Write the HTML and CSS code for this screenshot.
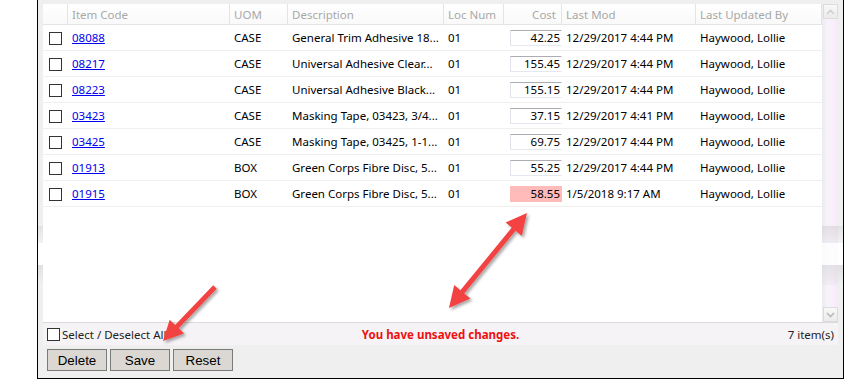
FILE: index.html
```html
<!DOCTYPE html>
<html lang="en">

<head>
  <meta charset="UTF-8" />
  <title>Item Costs</title>
  <link rel="stylesheet" href="styles.css">
</head>

<body>
  <div class="panel">
    <div class="grid-box">
      <div class="grid-main">
        <table class="grid">
          <colgroup>
            <col style="width:25px"><col style="width:162px"><col style="width:58px"><col style="width:156px">
            <col style="width:60px"><col style="width:58px"><col style="width:134px"><col style="width:126px">
          </colgroup>
          <thead>
            <tr>
              <th></th>
              <th>Item Code</th>
              <th>UOM</th>
              <th>Description</th>
              <th>Loc Num</th>
              <th class="num">Cost</th>
              <th>Last Mod</th>
              <th>Last Updated By</th>
            </tr>
          </thead>
          <tbody>
            <tr>
              <td><span class="chk"></span></td>
              <td><a href="#">08088</a></td>
              <td>CASE</td>
              <td>General Trim Adhesive 18...</td>
              <td>01</td>
              <td class="cost"><input value="42.25" /></td>
              <td>12/29/2017 4:44 PM</td>
              <td>Haywood, Lollie</td>
            </tr>
            <tr>
              <td><span class="chk"></span></td>
              <td><a href="#">08217</a></td>
              <td>CASE</td>
              <td>Universal Adhesive Clear...</td>
              <td>01</td>
              <td class="cost"><input value="155.45" /></td>
              <td>12/29/2017 4:44 PM</td>
              <td>Haywood, Lollie</td>
            </tr>
            <tr>
              <td><span class="chk"></span></td>
              <td><a href="#">08223</a></td>
              <td>CASE</td>
              <td>Universal Adhesive Black...</td>
              <td>01</td>
              <td class="cost"><input value="155.15" /></td>
              <td>12/29/2017 4:44 PM</td>
              <td>Haywood, Lollie</td>
            </tr>
            <tr>
              <td><span class="chk"></span></td>
              <td><a href="#">03423</a></td>
              <td>CASE</td>
              <td>Masking Tape, 03423, 3/4...</td>
              <td>01</td>
              <td class="cost"><input value="37.15" /></td>
              <td>12/29/2017 4:41 PM</td>
              <td>Haywood, Lollie</td>
            </tr>
            <tr>
              <td><span class="chk"></span></td>
              <td><a href="#">03425</a></td>
              <td>CASE</td>
              <td>Masking Tape, 03425, 1-1...</td>
              <td>01</td>
              <td class="cost"><input value="69.75" /></td>
              <td>12/29/2017 4:44 PM</td>
              <td>Haywood, Lollie</td>
            </tr>
            <tr>
              <td><span class="chk"></span></td>
              <td><a href="#">01913</a></td>
              <td>BOX</td>
              <td>Green Corps Fibre Disc, 5...</td>
              <td>01</td>
              <td class="cost"><input value="55.25" /></td>
              <td>12/29/2017 4:44 PM</td>
              <td>Haywood, Lollie</td>
            </tr>
            <tr>
              <td><span class="chk"></span></td>
              <td><a href="#">01915</a></td>
              <td>BOX</td>
              <td>Green Corps Fibre Disc, 5...</td>
              <td>01</td>
              <td class="cost dirty"><input value="58.55" /></td>
              <td>1/5/2018 9:17 AM</td>
              <td>Haywood, Lollie</td>
            </tr>
          </tbody>
        </table>

        <div class="vscroll">
          <div class="sbtn">
            <svg width="9" height="6" viewBox="0 0 9 6"><path d="M1 5 L4.5 1.5 L8 5" fill="none" stroke="#d0d0d0" stroke-width="1.6" /></svg>
          </div>
          <div class="track"></div>
          <div class="sbtn">
            <svg width="9" height="6" viewBox="0 0 9 6"><path d="M1 1 L4.5 4.5 L8 1" fill="none" stroke="#b9b9b9" stroke-width="1.6" /></svg>
          </div>
        </div>
      </div>

      <div class="grid-foot">
        <label class="select-all"><span class="chk"></span>Select / Deselect All</label>
        <span class="unsaved">You have unsaved changes.</span>
        <span class="count">7 item(s)</span>
      </div>
    </div>

    <div class="actions">
      <button>Delete</button>
      <button>Save</button>
      <button>Reset</button>
    </div>
  </div>

  <!-- callout arrows drawn over the screenshot -->
  <svg class="callouts" width="847" height="389" viewBox="0 0 847 389">
    <defs>
      <filter id="shadow" x="-20%" y="-20%" width="140%" height="140%">
        <feDropShadow dx="2" dy="2" stdDeviation="1.5" flood-color="#000" flood-opacity="0.35" />
      </filter>
    </defs>
    <polygon filter="url(#shadow)" fill="#f24242"
      points="527,213 521.8,235.9 515.6,230.8 464.2,293.4 470.4,298.5 449,308 454.2,285.1 460.4,290.2 511.8,227.6 505.6,222.5" />
    <polygon filter="url(#shadow)" fill="#f24242"
      points="216.8,288.7 178.7,328.3 184.1,333.5 163,341 169.7,319.7 175.1,324.9 213.2,285.3" />
  </svg>
</body>

</html>
```

FILE: styles.css
```css
html,
body {
  margin: 0;
  background: #fff;
}

body {
  position: relative;
  width: 847px;
  height: 389px;
  overflow: hidden;
  font-family: 'Noto Sans', 'Open Sans', sans-serif;
  font-size: 11.5px;
  color: #000;
}

.panel {
  margin-left: 37px;
  width: 795px;
  padding: 4px 5px 7px;
  /* side strips carry the faded bands of the captured window behind */
  background: linear-gradient(#efefef 0 226px, #e2e2e2 226px, #f2f2f2 243px, #fff 243px 265px, #e0e0e0 265px, #f0f0f0 285px, #efefef 285px);
  border: 1px solid #000;
  border-top: 0;
}

.grid-box {
  background: #fff;
}

.grid-main {
  display: flex;
  height: 318px;
}

.grid {
  width: 779px;
  table-layout: fixed;
  border-collapse: separate;
  border-spacing: 0;
  align-self: flex-start;
}

.grid th {
  height: 20px;
  padding: 0 4px;
  font-weight: normal;
  text-align: left;
  color: #a8a8a8;
  white-space: nowrap;
  overflow: hidden;
  background: linear-gradient(#fff, #f9f9f9);
  border-right: 1px solid #e4e4e4;
  border-bottom: 1px solid #e4e4e4;
}

.grid th.num {
  text-align: right;
  padding-right: 5px;
}

.grid td {
  height: 25px;
  padding: 0 4px;
  white-space: nowrap;
  overflow: hidden;
  border-bottom: 1px solid #f1eeee;
}

.grid td:first-child {
  padding: 0 0 0 6px;
}

.grid a {
  color: #0000ee;
}

.chk {
  display: inline-block;
  width: 11px;
  height: 11px;
  border: 1px solid #333;
  background: #fff;
  vertical-align: middle;
}

.grid td.cost {
  padding: 0 0 0 6px;
}

.cost input {
  box-sizing: border-box;
  display: block;
  width: 100%;
  height: 16px;
  margin: 0;
  padding: 0 1px 0 0;
  font: inherit;
  line-height: 14px;
  text-align: right;
  color: #000;
  background: #fff;
  border: 1px solid;
  border-color: #abadb3 transparent #e3e9ef #e2e3ea;
  outline: none;
}

.cost.dirty input {
  background: #ffbaba;
  border-color: #ffbaba;
}

.vscroll {
  width: 16px;
  display: flex;
  flex-direction: column;
  background: linear-gradient(to right, #ecebf1, #f6f3fa 35%, #fbeefb 65%, #efedf4);
}

.sbtn {
  width: 13px;
  height: 13px;
  margin-left: 1px;
  display: flex;
  align-items: center;
  justify-content: center;
  background: linear-gradient(#f8f8f8, #ebebeb);
  border: 1px solid #dcdcdc;
}

.track {
  flex: 1;
  background: linear-gradient(transparent 0 207px, rgba(200, 200, 205, 0.45) 207px, rgba(225, 225, 230, 0.35) 224px, rgba(255, 255, 255, 0.8) 224px 246px, rgba(200, 200, 205, 0.4) 246px, rgba(225, 225, 230, 0.3) 266px, transparent 266px);
}

.grid-foot {
  height: 22px;
  display: grid;
  grid-template-columns: 1fr auto 1fr;
  align-items: center;
  padding: 0 4px 0 4px;
  background: #f6f3f6;
  border-top: 1px solid #dadada;
}

.select-all {
  display: flex;
  align-items: center;
  color: #222;
}

.select-all .chk {
  margin-right: 2px;
}

.unsaved {
  color: #ee1010;
  font-weight: bold;
}

.count {
  justify-self: end;
  color: #222;
}

.actions {
  display: flex;
  gap: 3px;
  padding: 4px 0 0 4px;
}

.actions button {
  width: 60px;
  height: 22px;
  padding: 0;
  font-family: 'Liberation Sans', Arial, sans-serif;
  font-size: 13.33px;
  color: #000;
  background: #dbd8d3;
  border: 1px solid #7a7a7a;
}

.callouts {
  position: absolute;
  top: 0;
  left: 0;
  pointer-events: none;
}
```
